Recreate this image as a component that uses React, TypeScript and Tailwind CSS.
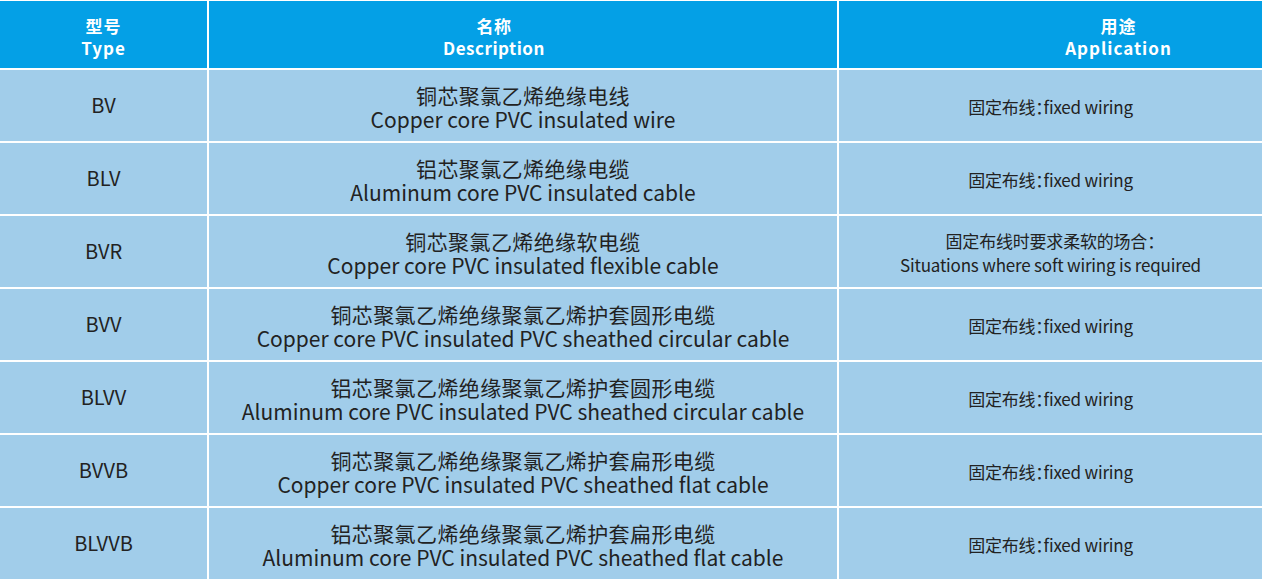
const rows = [
  { type: "BV", zh: "铜芯聚氯乙烯绝缘电线", en: "Copper core PVC insulated wire", app: ["固定布线：fixed wiring"] },
  { type: "BLV", zh: "铝芯聚氯乙烯绝缘电缆", en: "Aluminum core PVC insulated cable", app: ["固定布线：fixed wiring"] },
  {
    type: "BVR",
    zh: "铜芯聚氯乙烯绝缘软电缆",
    en: "Copper core PVC insulated flexible cable",
    app: ["固定布线时要求柔软的场合：", "Situations where soft wiring is required"],
  },
  {
    type: "BVV",
    zh: "铜芯聚氯乙烯绝缘聚氯乙烯护套圆形电缆",
    en: "Copper core PVC insulated PVC sheathed circular cable",
    app: ["固定布线：fixed wiring"],
  },
  {
    type: "BLVV",
    zh: "铝芯聚氯乙烯绝缘聚氯乙烯护套圆形电缆",
    en: "Aluminum core PVC insulated PVC sheathed circular cable",
    app: ["固定布线：fixed wiring"],
  },
  {
    type: "BVVB",
    zh: "铜芯聚氯乙烯绝缘聚氯乙烯护套扁形电缆",
    en: "Copper core PVC insulated PVC sheathed flat cable",
    app: ["固定布线：fixed wiring"],
  },
  {
    type: "BLVVB",
    zh: "铝芯聚氯乙烯绝缘聚氯乙烯护套扁形电缆",
    en: "Aluminum core PVC insulated PVC sheathed flat cable",
    app: ["固定布线：fixed wiring"],
  },
]

const font = "font-['Noto_Sans_CJK_SC','Noto_Sans',sans-serif]"
const head = "bg-[#04a0e6] flex flex-col items-center justify-center text-white font-bold text-[17px] leading-[22px] pt-[5px]"

export default function App() {
  return (
    <div className={`w-[1264px] h-[580px] bg-white ${font}`}>
      <div className="grid grid-cols-[207px_628px_423px] grid-rows-[67px_repeat(7,71px)] gap-[2px] pt-px">
        {/* cabecera */}
        <div className={`${head} tracking-[1px]`}>
          <span>型号</span>
          <span>Type</span>
        </div>
        <div className={`${head} tracking-[0.5px] pr-[58px]`}>
          <span>名称</span>
          <span>Description</span>
        </div>
        <div className={`${head} tracking-[1px] pl-[136px]`}>
          <span>用途</span>
          <span>Application</span>
        </div>

        {/* filas */}
        {rows.map((r) => (
          <>
            <div key={r.type + "-t"} className="bg-[#a1cdea] flex items-center justify-center text-[#222] text-[20px] pb-[2px]">
              {r.type}
            </div>
            <div
              key={r.type + "-d"}
              className="bg-[#a1cdea] flex flex-col items-center justify-center text-[#222] text-[21px] leading-[24px] pt-[2px]"
            >
              <span className="tracking-[0.4px]">{r.zh}</span>
              <span>{r.en}</span>
            </div>
            <div
              key={r.type + "-a"}
              className="bg-[#a1cdea] flex flex-col items-center justify-center text-[#222] text-[17px] leading-[24px] tracking-[-0.2px] [font-feature-settings:'halt'] pt-[2px]"
            >
              {r.app.map((line) => (
                <span key={line}>{line}</span>
              ))}
            </div>
          </>
        ))}
      </div>
    </div>
  )
}
